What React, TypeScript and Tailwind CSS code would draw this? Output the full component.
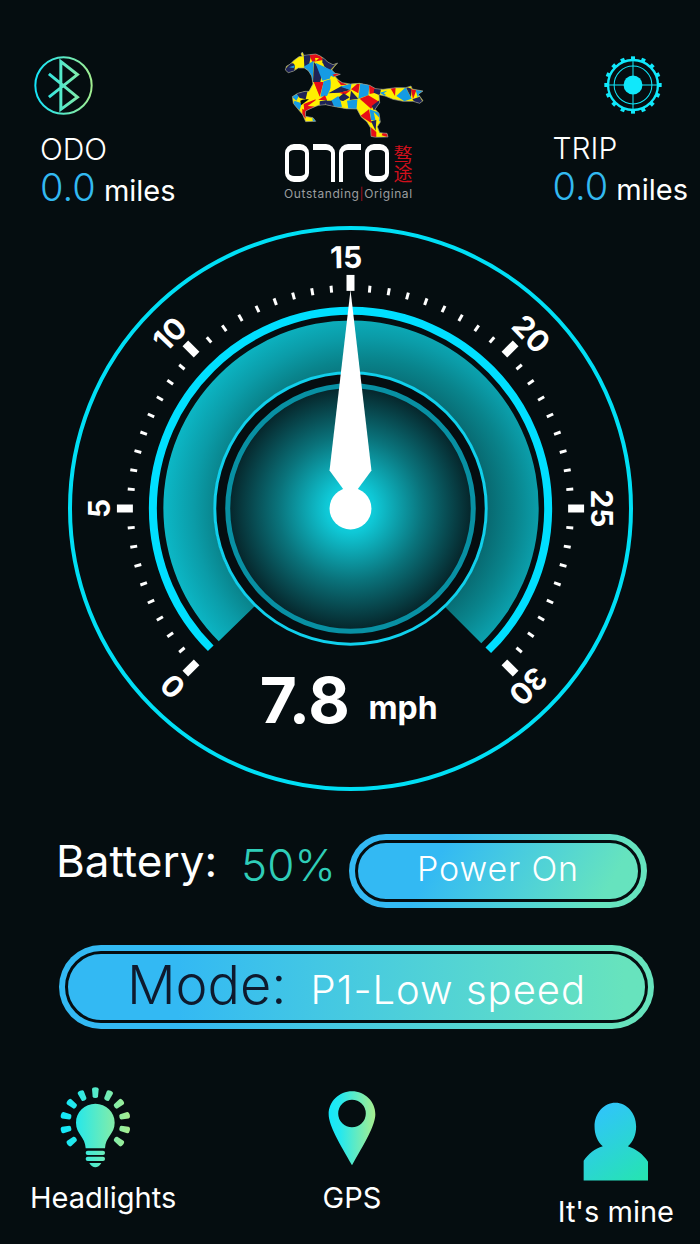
import type { ReactNode } from 'react';

const MINOR_STEP = 5;

const labels = [
    { text: '0', angle: -135 },
    { text: '5', angle: -90 },
    { text: '10', angle: -46 },
    { text: '15', angle: -1 },
    { text: '20', angle: 46 },
    { text: '25', angle: 90 },
    { text: '30', angle: 135 },
];

const ticks = Array.from({ length: 55 }, (_, i) => ({
    angle: -135 + i * MINOR_STEP,
    major: i % 9 === 0,
}));

const YELLOW = '#fff000';
const RED = '#e60d17';
const BLUE = '#159be4';
const NAVY = '#1e2357';

const facets: [string, string][] = [
    [NAVY, '44,90 62,70 76,70 74,98 50,100'],
    [BLUE, '58,82 76,76 72,84'],
    [YELLOW, '70,68 97,36 104,76 80,82'],
    [NAVY, '102,42 124,46 118,76 104,80'],
    [RED, '118,42 150,42 160,60 128,66'],
    [YELLOW, '136,54 148,54 138,64'],
    [NAVY, '158,52 180,64 210,60 180,92 158,74'],
    [YELLOW, '136,66 160,70 164,80'],
    [BLUE, '102,80 132,62 130,124'],
    [NAVY, '133,66 158,96 152,126 130,126'],
    [BLUE, '137,68 190,92 180,116 158,122'],
    [BLUE, '186,88 198,100 192,112 182,106'],
    [RED, '196,102 216,100 196,110 188,104'],
    [RED, '132,126 162,126 150,170'],
    [YELLOW, '104,170 132,128 148,170'],
    [BLUE, '162,124 182,118 186,138 172,168 152,170'],
    [YELLOW, '184,114 212,130 214,138 182,158'],
    [NAVY, '176,160 216,138 242,150 210,158'],
    [RED, '202,120 232,134 214,136'],
    [BLUE, '212,140 246,130 242,150'],
    [YELLOW, '246,128 274,130 266,174 246,150'],
    [RED, '262,132 270,132 266,160 244,148'],
    [BLUE, '272,128 300,132 296,166 266,176'],
    [RED, '298,134 322,146 318,158 300,162'],
    [NAVY, '314,146 334,148 330,166 312,158'],
    [NAVY, '240,180 244,152 266,176'],
    [RED, '208,158 244,150 226,164'],
    [NAVY, '200,178 222,160 240,172 222,184'],
    [YELLOW, '170,176 188,160 206,172 188,182'],
    [BLUE, '184,182 206,168 220,200 194,202'],
    [NAVY, '168,182 186,182 194,202 168,196'],
    [YELLOW, '214,186 232,178 234,206 218,206'],
    [BLUE, '232,182 264,178 262,208 236,206'],
    [RED, '270,176 296,166 326,184 304,206'],
    [YELLOW, '264,176 298,208 276,230 260,212'],
    [NAVY, '306,198 330,180 328,206 312,210'],
    [RED, '298,208 272,228 306,250'],
    [BLUE, '300,208 328,218 332,244 304,240'],
    [YELLOW, '312,216 330,234 322,262'],
    [NAVY, '304,244 320,240 318,272'],
    [RED, '302,260 320,276 320,292 304,292'],
    [RED, '340,276 356,282 354,292 336,286'],
    [BLUE, '330,158 352,152 346,168'],
    [YELLOW, '342,160 366,144 376,168 360,170'],
    [RED, '362,144 378,142 376,168'],
    [BLUE, '380,168 408,142 426,176 404,184'],
    [NAVY, '408,140 426,146 424,172'],
    [RED, '424,148 440,150 430,178'],
    [BLUE, '438,150 462,152 444,172'],
    [NAVY, '428,178 450,170 462,190 440,192'],
    [BLUE, '64,168 92,160 80,182'],
    [NAVY, '80,160 114,152 108,178 90,174'],
    [BLUE, '74,182 96,190 90,210 72,196'],
    [RED, '102,192 138,178 132,202 104,216'],
    [YELLOW, '114,198 136,182 168,184 146,200'],
    [RED, '146,180 166,166 172,180'],
    [NAVY, '150,184 172,180 166,196 150,198'],
    [RED, '98,206 108,212 108,236 98,224'],
    [BLUE, '128,234 140,234 140,246 130,246'],
];

const HORSE_OUTLINE =
    'M47 90 50 79 62 72 74 60 88 50 98 49 94 42 98 36 103 46 120 44 138 42 150 47 164 56 174 66 190 74 204 69 194 80 186 90 196 100 212 103 196 109 206 120 218 128 242 132 270 130 300 136 318 146 340 148 378 143 408 143 424 138 428 147 460 153 446 163 460 182 450 190 430 184 400 184 370 178 346 168 328 164 330 188 316 208 328 220 332 246 323 260 330 278 352 280 355 291 318 292 304 289 303 264 292 246 274 230 262 207 230 206 196 200 168 194 146 196 122 206 108 213 107 229 130 233 138 244 108 245 99 224 84 206 71 190 68 170 84 160 106 154 118 154 130 132 126 108 116 92 104 84 86 84 72 93 56 98Z';

function Horse() {
    return (
        <svg viewBox="40 30 426 270" className="h-[90px] w-[142px]" aria-hidden="true">
            <defs>
                <clipPath id="horse">
                    <path d={HORSE_OUTLINE} />
                </clipPath>
            </defs>
            <g clipPath="url(#horse)">
                <rect x="40" y="30" width="426" height="270" fill={YELLOW} />
                {facets.map(([fill, points]) => (
                    <polygon key={points} points={points} fill={fill} />
                ))}
            </g>
            <path d={HORSE_OUTLINE} fill="none" stroke="#8d929c" strokeWidth="2" />
            <path d="M92 182 Q98 176 118 178 L94 196 Z" fill="#050d10" />
        </svg>
    );
}

function Logo() {
    return (
        <div className="flex flex-col items-start">
            <Horse />
            <div className="mt-1 ml-0.5 flex h-[38px] items-stretch">
                <div role="img" aria-label="OTTO" className="flex items-stretch gap-1">
                    <span className="w-6 rounded-[9px] border-x-4 border-y-[6px] border-white" />
                    <span className="w-[22px] rounded-tr-[9px] border-t-[6px] border-r-4 border-white" />
                    <span className="w-[22px] rounded-tl-[9px] border-t-[6px] border-l-4 border-white" />
                    <span className="w-6 rounded-[9px] border-x-4 border-y-[6px] border-white" />
                </div>
                <span className="ml-1 w-5 text-center font-['Noto_Sans_CJK_SC',sans-serif] text-[19px] leading-[19px] text-[#d0101c]">
                    骜途
                </span>
            </div>
            <p className="mt-1 ml-px text-xs leading-4 tracking-wider whitespace-nowrap text-[#9b9d9f]">
                Outstanding<span className="text-[#a01020]">|</span>Original
            </p>
        </div>
    );
}

function Reading({ name, value }: { name: string; value: string }) {
    return (
        <div className="pt-5 pl-1.5 whitespace-nowrap">
            <h2 className="text-[30px] leading-7 font-light">{name}</h2>
            <p className="mt-1.5 text-[29px] leading-9">
                <span className="text-[38px] leading-9 font-light text-[#33b9f0]">{value}</span> miles
            </p>
        </div>
    );
}

function BluetoothIcon() {
    return (
        <svg viewBox="42 47 178 178" className="size-[59px]" fill="none" aria-hidden="true">
            <defs>
                <linearGradient id="bt" gradientUnits="userSpaceOnUse" x1="45" y1="0" x2="217" y2="0">
                    <stop offset="0" stopColor="#13e4fa" />
                    <stop offset="1" stopColor="#a2ee90" />
                </linearGradient>
            </defs>
            <circle cx="131" cy="136" r="85" stroke="url(#bt)" strokeWidth="6" />
            <path d="M87 101 173 171 123 208V64L173 103 87 171" stroke="url(#bt)" strokeWidth="9" />
        </svg>
    );
}

function TargetIcon() {
    return (
        <svg viewBox="-86 -86 172 172" className="size-[58px]" fill="none" stroke="#10e8fb" aria-hidden="true">
            <circle r="74" strokeWidth="7" />
            <circle r="56" strokeWidth="3" />
            <path d="M-74 0H74M0-74V74" strokeWidth="3" />
            <circle r="28" fill="#10e8fb" stroke="none" />
            {Array.from({ length: 16 }, (_, i) => (
                <rect
                    key={i}
                    x="-6"
                    y="-85"
                    width="12"
                    height="10"
                    fill="#10e8fb"
                    stroke="none"
                    transform={`rotate(${i * 22.5})`}
                />
            ))}
        </svg>
    );
}

function Speedometer() {
    return (
        <svg viewBox="-284 -284 568 568" className="mx-auto mt-4 block w-[81%] fill-white" role="img" aria-label="Speed 7.8 mph">
            <defs>
                <radialGradient id="band" gradientUnits="userSpaceOnUse" cx="15" cy="0" r="205">
                    <stop offset="0.58" stopColor="#08666d" />
                    <stop offset="0.73" stopColor="#09848c" />
                    <stop offset="0.84" stopColor="#0b9ca8" />
                    <stop offset="1" stopColor="#0cbac9" />
                </radialGradient>
                <radialGradient id="hub" gradientUnits="userSpaceOnUse" cx="0" cy="0" r="121">
                    <stop offset="0" stopColor="#10dfee" />
                    <stop offset="0.2" stopColor="#0fc8d6" />
                    <stop offset="0.6" stopColor="#0a737b" />
                    <stop offset="1" stopColor="#06262b" />
                </radialGradient>
            </defs>

            <circle r="281" fill="none" stroke="#00dff5" strokeWidth="4" />

            {ticks.map(({ angle, major }) => (
                <rect
                    key={angle}
                    x={major ? -4 : -1.5}
                    y={major ? -234 : -224}
                    width={major ? 8 : 3}
                    height={major ? 16 : 7}
                    transform={`rotate(${angle})`}
                />
            ))}

            {labels.map(({ text, angle }) => (
                <text
                    key={text}
                    y="-241"
                    textAnchor="middle"
                    className="text-[30px] font-bold"
                    transform={`rotate(${angle})`}
                >
                    {text}
                </text>
            ))}

            {/* coloured band, open at the bottom */}
            <path d="M-140 140A198 198 0 1 1 138 142" fill="none" stroke="#00dfff" strokeWidth="8" />
            <path d="M-132 133A188 188 0 1 1 131 135L95 99A137 137 0 1 0-96 98Z" fill="url(#band)" />
            <circle r="136" fill="#050d10" stroke="#10d0ec" strokeWidth="3" />
            <circle r="123" fill="url(#hub)" stroke="#0890a3" strokeWidth="5" />

            {/* needle */}
            <path d="M0-219 21-38 7-19H-7L-21-38Z" />
            <circle r="21" />

            <text x="-91" y="215" className="text-[64px] font-bold">7.8</text>
            <text x="18" y="211" className="text-[32px] font-bold">mph</text>
        </svg>
    );
}

function BulbIcon() {
    return (
        <svg viewBox="120 48 213 246" className="h-[82px] w-[71px]" fill="url(#bulb)" aria-hidden="true">
            <defs>
                <linearGradient id="bulb" gradientUnits="userSpaceOnUse" x1="123" y1="0" x2="330" y2="0">
                    <stop offset="0" stopColor="#12e8fb" />
                    <stop offset="0.22" stopColor="#26e8ea" />
                    <stop offset="1" stopColor="#a8ee8e" />
                </linearGradient>
                <mask id="rays" maskUnits="userSpaceOnUse" x="120" y="48" width="213" height="246">
                    <g transform="translate(226 158)">
                        {[-5, -4, -3, -2, -1, 0, 1, 2, 3, 4, 5].map((n) => (
                            <path
                                key={n}
                                d="M-10-100Q-10-106 0-106T10-100L8-78Q7-74 0-74T-8-78Z"
                                fill="#fff"
                                transform={`rotate(${n * 25.7})`}
                            />
                        ))}
                    </g>
                </mask>
            </defs>
            <rect x="120" y="48" width="213" height="246" mask="url(#rays)" />
            <path d="M226 101C194 101 168 126 168 158 168 192 196 200 197 235H255C256 200 284 192 284 158 284 126 258 101 226 101Z" />
            <rect x="197" y="242" width="58" height="13" rx="6" />
            <rect x="197" y="260" width="58" height="13" rx="6" />
            <path d="M208 279H244Q236 292 226 292T208 279Z" />
        </svg>
    );
}

function PinIcon() {
    return (
        <svg viewBox="920 64 146 228" className="h-[76px] w-12" aria-hidden="true">
            <defs>
                <linearGradient id="pin" x1="0" y1="0" x2="1" y2="0">
                    <stop offset="0" stopColor="#13e8fc" />
                    <stop offset="0.25" stopColor="#26e8ee" />
                    <stop offset="1" stopColor="#a8ee8e" />
                </linearGradient>
            </defs>
            <path
                fill="url(#pin)"
                fillRule="evenodd"
                d="M993 66C954 66 922 97 922 136 922 170 956 226 993 291 1030 226 1064 170 1064 136 1064 97 1032 66 993 66ZM993 92A42 42 0 1 1 993 176 42 42 0 1 1 993 92Z"
            />
        </svg>
    );
}

function UserIcon() {
    return (
        <svg viewBox="124 70 200 240" className="h-20 w-[66px]" aria-hidden="true">
            <defs>
                <linearGradient id="user" gradientUnits="userSpaceOnUse" x1="160" y1="90" x2="300" y2="300">
                    <stop offset="0" stopColor="#30c4fb" />
                    <stop offset="1" stopColor="#26e3b4" />
                </linearGradient>
            </defs>
            <path
                fill="url(#user)"
                d="M222 71C256 71 285 102 285 143 285 168 276 189 260 203 285 211 307 228 321 250V307H126V247C140 226 160 210 184 203 168 189 159 168 159 143 159 102 188 71 222 71Z"
            />
        </svg>
    );
}

function NavButton({ label, className, children }: { label: string; className: string; children: ReactNode }) {
    return (
        <button type="button" className={`flex flex-col items-center text-[29px] leading-8 ${className}`}>
            {children}
            {label}
        </button>
    );
}

export default function App() {
    return (
        <main className="min-h-screen bg-[#050d10] pb-4 font-['Inter',sans-serif] text-white">
            <header className="grid grid-cols-[1fr_142px_1fr]">
                <div className="pt-14 pl-[34px]">
                    <button type="button" aria-label="Bluetooth" className="block">
                        <BluetoothIcon />
                    </button>
                    <Reading name="ODO" value="0.0" />
                </div>
                <div className="pt-[50px] pl-1">
                    <Logo />
                </div>
                <div className="flex flex-col items-end pt-14 pr-3">
                    <button type="button" aria-label="Locate" className="mr-[26px] block">
                        <TargetIcon />
                    </button>
                    <Reading name="TRIP" value="0.0" />
                </div>
            </header>

            <Speedometer />

            <section className="mt-[42px] flex items-center pr-[53px] pl-14 whitespace-nowrap">
                <span className="pb-5 text-[44px] leading-none">Battery:</span>
                <span className="ml-6 pb-3 text-[44px] leading-none font-light text-[#2fcdb8]">50%</span>
                <button
                    type="button"
                    className="ml-auto h-[74px] w-[298px] rounded-full bg-linear-120 from-[#33b9f3] from-30% to-[#66e3be] to-85% p-1.5 font-light"
                >
                    <span className="flex h-full items-center justify-center rounded-full border-[3px] border-[#050d10] pb-1.5 text-[34px] tracking-wide">
                        Power On
                    </span>
                </button>
            </section>

            <section className="mt-[37px] pr-[46px] pl-[59px]">
                <button
                    type="button"
                    className="h-[84px] w-full rounded-full bg-linear-to-r from-[#33b9f3] from-20% to-[#67e3bd] to-95% p-1.5 font-light"
                >
                    <span className="flex h-full items-baseline justify-center gap-6 rounded-full border-[3px] border-[#050d10] leading-[62px] whitespace-nowrap">
                        <span className="text-[54px] text-[#0e1a2e]">Mode:</span>
                        <span className="text-[40px] tracking-wide">P1-Low speed</span>
                    </span>
                </button>
            </section>

            <nav className="mt-[57px] grid grid-cols-[1fr_auto_1fr] items-start pr-[26px] pl-[30px]">
                <NavButton label="Headlights" className="justify-self-start gap-3.5">
                    <span className="mr-4">
                        <BulbIcon />
                    </span>
                </NavButton>
                <NavButton label="GPS" className="gap-4 pt-1">
                    <PinIcon />
                </NavButton>
                <NavButton label="It's mine" className="justify-self-end gap-3.5 pt-4">
                    <UserIcon />
                </NavButton>
            </nav>
        </main>
    );
}
